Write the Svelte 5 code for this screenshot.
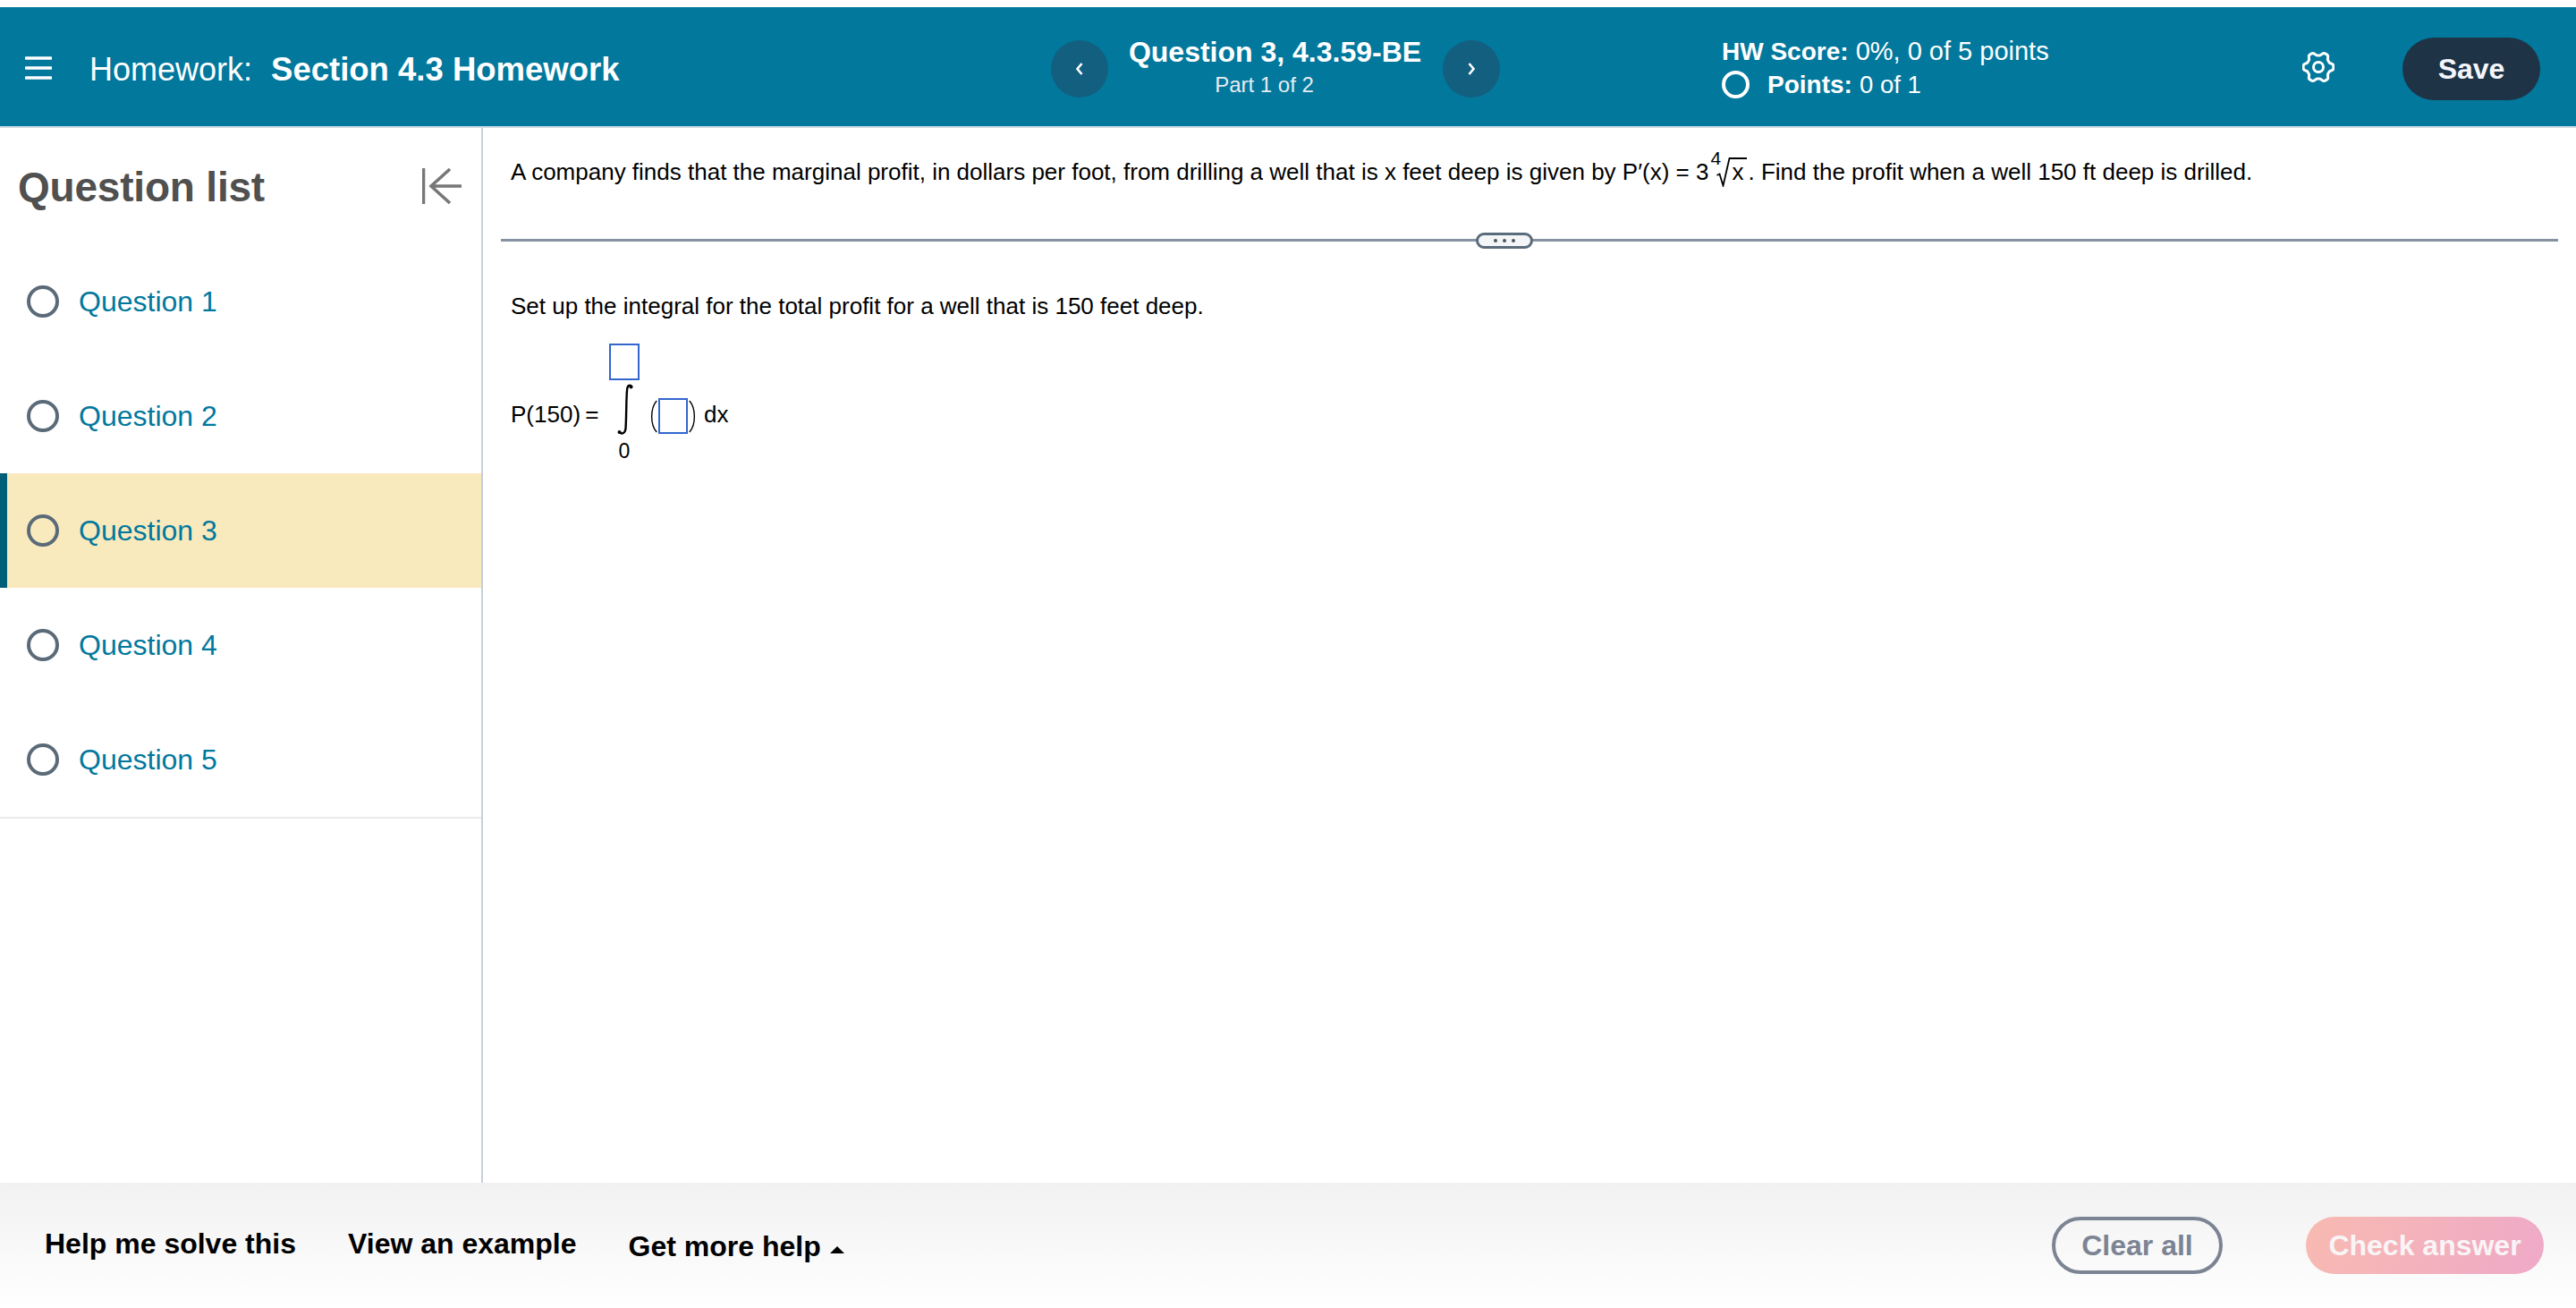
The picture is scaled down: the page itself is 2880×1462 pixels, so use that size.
<script>
  const questions = [1, 2, 3, 4, 5];
  const active = 3;
  function cogPath() {
    const c = 18, pts = [];
    const n = 72;
    for (let i = 0; i < n; i++) {
      const a = (i / n) * Math.PI * 2 - Math.PI / 2;
      const w = Math.cos(6 * a + Math.PI * 3);
      const r = 15 + 1.9 * Math.max(-1, Math.min(1, -w * 1.6));
      pts.push(`${(c + r * Math.cos(a)).toFixed(2)} ${(c + r * Math.sin(a)).toFixed(2)}`);
    }
    return 'M' + pts.join('L') + 'Z';
  }
</script>

<div class="page">
  <header class="header">
    <div class="left">
      <svg class="menu" viewBox="0 0 30 26" aria-hidden="true">
        <path d="M1 2h28M1 13h28M1 24h28" />
      </svg>
      <div class="title">Homework: <b>Section 4.3 Homework</b></div>
    </div>
    <div class="nav">
      <button class="round" aria-label="Previous">
        <svg viewBox="0 0 12 18"><path d="M8.500 3 3.500 9l5 6" /></svg>
      </button>
      <div class="qinfo">
        <div class="qname">Question 3, 4.3.59-BE</div>
        <div class="qpart">Part 1 of 2</div>
      </div>
      <button class="round" aria-label="Next">
        <svg viewBox="0 0 12 18"><path d="M3.500 3 8.500 9l-5 6" /></svg>
      </button>
    </div>
    <div class="score">
      <div class="hw"><b>HW Score:</b> 0%, 0 of 5 points</div>
      <div class="pts"><span class="ring"></span><span><b>Points:</b> <span class="of">0 of 1</span></span></div>
    </div>
    <svg class="gear" viewBox="0 0 36 36" aria-hidden="true">
      <path d={cogPath()} />
      <circle cx="18" cy="18" r="5.500" />
    </svg>
    <button class="save">Save</button>
  </header>

  <main class="body">
    <aside class="side">
      <div class="side-head">
        <h2>Question list</h2>
        <svg class="collapse" viewBox="0 0 44 40" aria-hidden="true">
          <path d="M1.500 0v40M44 20H10M31 1 10 20l21 19" />
        </svg>
      </div>
      <ul class="list">
        {#each questions as q}
          <li class="row" class:active={q === active}>
            <span class="dot"></span>
            <span class="qlabel">Question {q}</span>
          </li>
        {/each}
      </ul>
    </aside>

    <section class="content">
      <p class="stem">
        A company finds that the marginal profit, in dollars per foot, from drilling a well that is x feet deep is given by P′(x) = 3<span class="root"><span class="index">4</span><svg viewBox="0 0 34 33" class="radical"><path d="M.5 20l3-1.500 4 13L14.500 1H34" /></svg><span class="radicand">x</span></span>. Find the profit when a well 150 ft deep is drilled.
      </p>
      <div class="divider"><span class="pill"><i></i><i></i><i></i></span></div>
      <p class="setup">Set up the integral for the total profit for a well that is 150 feet deep.</p>
      <div class="math">
        <span class="lhs">P(150) =</span>
        <span class="limits">
          <span class="box top"></span>
          <svg class="integral" viewBox="0 0 22 60" aria-hidden="true">
            <path d="M19.500 4.500c-1-2.500-4-2.500-5 .5-1.500 5-1 32-2 46-.5 5-4.500 7-6.500 4" />
            <circle cx="18.500" cy="4.500" r="2" />
            <circle cx="5.500" cy="55" r="2" />
          </svg>
          <span class="zero">0</span>
        </span>
        <span class="paren">
          <svg class="p" viewBox="0 0 10 40"><path d="M9 1C1 10 1 30 9 39" /></svg>
          <span class="box inner"></span>
          <svg class="p" viewBox="0 0 10 40"><path d="M1 1c8 9 8 29 0 38" /></svg>
        </span>
        <span class="dx">dx</span>
      </div>
    </section>
  </main>

  <footer class="footer">
    <div class="help">
      <span>Help me solve this</span>
      <span>View an example</span>
      <span class="more">Get more help <i class="tri"></i></span>
    </div>
    <div class="actions">
      <button class="clear">Clear all</button>
      <button class="check">Check answer</button>
    </div>
  </footer>
</div>

<style>
  :global(body) { margin: 0; background: #fff; }
  .page {
    width: 2880px; height: 1462px; padding-top: 8px; box-sizing: border-box;
    display: flex; flex-direction: column; overflow: hidden;
    font-family: "Liberation Sans", Arial, sans-serif; color: #000;
  }
  button { font-family: inherit; border: 0; padding: 0; }
  .header {
    height: 135px; box-sizing: border-box; flex: none; background: #02789d;
    border-bottom: 2px solid #cfdbe4; color: #fff; padding-top: 4px;
    display: grid; grid-template-columns: 1175px 751px 648px 112px 154px;
    align-items: center;
  }
  .left { display: flex; align-items: center; padding-left: 28px; }
  .menu { width: 30px; height: 26px; margin: -2px 42px 0 0; fill: none; stroke: #fff; stroke-width: 3.500; stroke-linecap: round; }
  .title { font-size: 36px; white-space: pre; padding-top: 2px; }
  .title b { font-size: 36.500px; margin-left: 11px; }
  .nav { display: flex; align-items: center; }
  .round { width: 64px; height: 64px; border-radius: 50%; background: #135f80; display: flex; align-items: center; justify-content: center; }
  .round svg { width: 12px; height: 18px; fill: none; stroke: #fff; stroke-width: 2.600; }
  .qinfo { width: 375px; text-align: center; transform: translateY(-2px); margin-left: -1px; }
  .qname { font-size: 32px; font-weight: 700; line-height: 40px; }
  .qpart { font-size: 24px; line-height: 34px; color: #e6edf2; padding-right: 24px; }
  .score { font-size: 29px; line-height: 36px; margin-left: -1px; transform: translateY(-1px); }
  .score b { font-size: 28px; }
  .score .of { font-size: 27.500px; }
  .pts { display: flex; align-items: center; gap: 20px; }
  .ring { width: 23px; height: 23px; border: 4px solid #fff; border-radius: 50%; display: block; }
  .gear { width: 36px; height: 36px; fill: none; stroke: #fff; stroke-width: 3; margin-top: -4px; }
  .save { width: 154px; height: 70px; border-radius: 35px; background: #1e3446; color: #f4f6fb; font-size: 32px; font-weight: 700; padding-top: 2px; }

  .body { flex: 1; display: flex; min-height: 0; }
  .side { width: 540px; box-sizing: border-box; border-right: 2px solid #c7cedb; flex: none; }
  .side-head { height: 130px; display: flex; align-items: center; justify-content: space-between; padding: 0 22px 0 20px; }
  h2 { margin: 2px 0 0; font-size: 46px; font-weight: 700; color: #505050; letter-spacing: -.2px; }
  .collapse { width: 44px; height: 40px; fill: none; stroke: #777; stroke-width: 3.500; margin-top: -1px; }
  .list { list-style: none; margin: 0; padding: 0; border-bottom: 2px solid #e9eaec; }
  .row { height: 128px; display: flex; align-items: center; padding-left: 30px; gap: 22px; }
  .row.active { background: #f9eabd; box-shadow: inset 8px 0 0 #005e78; }
  .dot { width: 28px; height: 28px; border: 4px solid #5a6a78; border-radius: 50%; display: block; }
  .qlabel { font-size: 32px; color: #02789d; }

  .content { flex: 1; padding: 0 20px; font-size: 26px; }
  p { margin: 0; }
  .stem { padding: 29px 0 0 11px; line-height: 40px; height: 85px; box-sizing: border-box; white-space: nowrap; }
  .root { display: inline-block; position: relative; padding: 0 5px 0 26px; }
  .index { position: absolute; left: 2px; top: -7px; font-size: 21px; line-height: 24px; }
  .radical { position: absolute; left: 9px; top: 4px; width: 34px; height: 33px; fill: none; stroke: #000; stroke-width: 1.800; }
  .divider { height: 3px; background: #8492a2; margin-top: 39px; position: relative; }
  .pill { position: absolute; left: 1090px; top: -7px; width: 64px; height: 18px; box-sizing: border-box; background: #f3f5f7; border: 3px solid #5a6b7c; border-radius: 9px; display: flex; align-items: center; justify-content: center; gap: 6px; }
  .pill i { width: 4px; height: 4px; background: #4a5561; border-radius: 50%; }
  .setup { padding: 52px 0 0 11px; line-height: 40px; }
  .math { display: flex; align-items: flex-start; padding: 22px 0 0 11px; }
  .lhs { width: 110px; flex: none; margin-top: 59px; line-height: 40px; word-spacing: -2px; white-space: nowrap; }
  .limits { display: flex; flex-direction: column; align-items: center; width: 34px; }
  .box { display: block; box-sizing: border-box; border: 2.500px solid #3366cc; background: #fff; }
  .box.top { width: 34px; height: 41px; }
  .integral { width: 22px; height: 60px; fill: none; stroke: #000; stroke-width: 2.400; margin: 3px 0 1px; }
  .integral circle { fill: #000; stroke: none; }
  .zero { font-size: 23px; line-height: 30px; }
  .paren { display: flex; align-items: center; margin: 61px 0 0 10px; height: 40px; }
  .p { width: 11px; height: 37px; fill: none; stroke: #000; stroke-width: 1.500; }
  .box.inner { width: 33px; height: 40px; }
  .dx { margin: 59px 0 0 7px; line-height: 40px; }

  .footer {
    height: 140px; flex: none; box-sizing: border-box; padding: 0 36px 0 50px;
    background: linear-gradient(#f1f1f1, #fff);
    display: flex; align-items: center; justify-content: space-between;
  }
  .help { display: flex; gap: 58px; font-size: 32px; font-weight: 700; }
  .more { display: flex; align-items: center; gap: 10px; margin-top: 3px; }
  .tri { width: 0; height: 0; border: 8px solid transparent; border-top: 0; border-bottom: 8px solid #000; margin-top: 6px; }
  .actions { display: flex; gap: 93px; }
  .actions button { height: 64px; border-radius: 32px; font-size: 32px; font-weight: 700; }
  .clear { width: 191px; box-sizing: border-box; border: 4px solid #7c8494; background: transparent; color: #7c8494; }
  .check { width: 266px; background: linear-gradient(110deg, #f8bab1, #efa9c8); color: #f9f5f7; }
</style>
